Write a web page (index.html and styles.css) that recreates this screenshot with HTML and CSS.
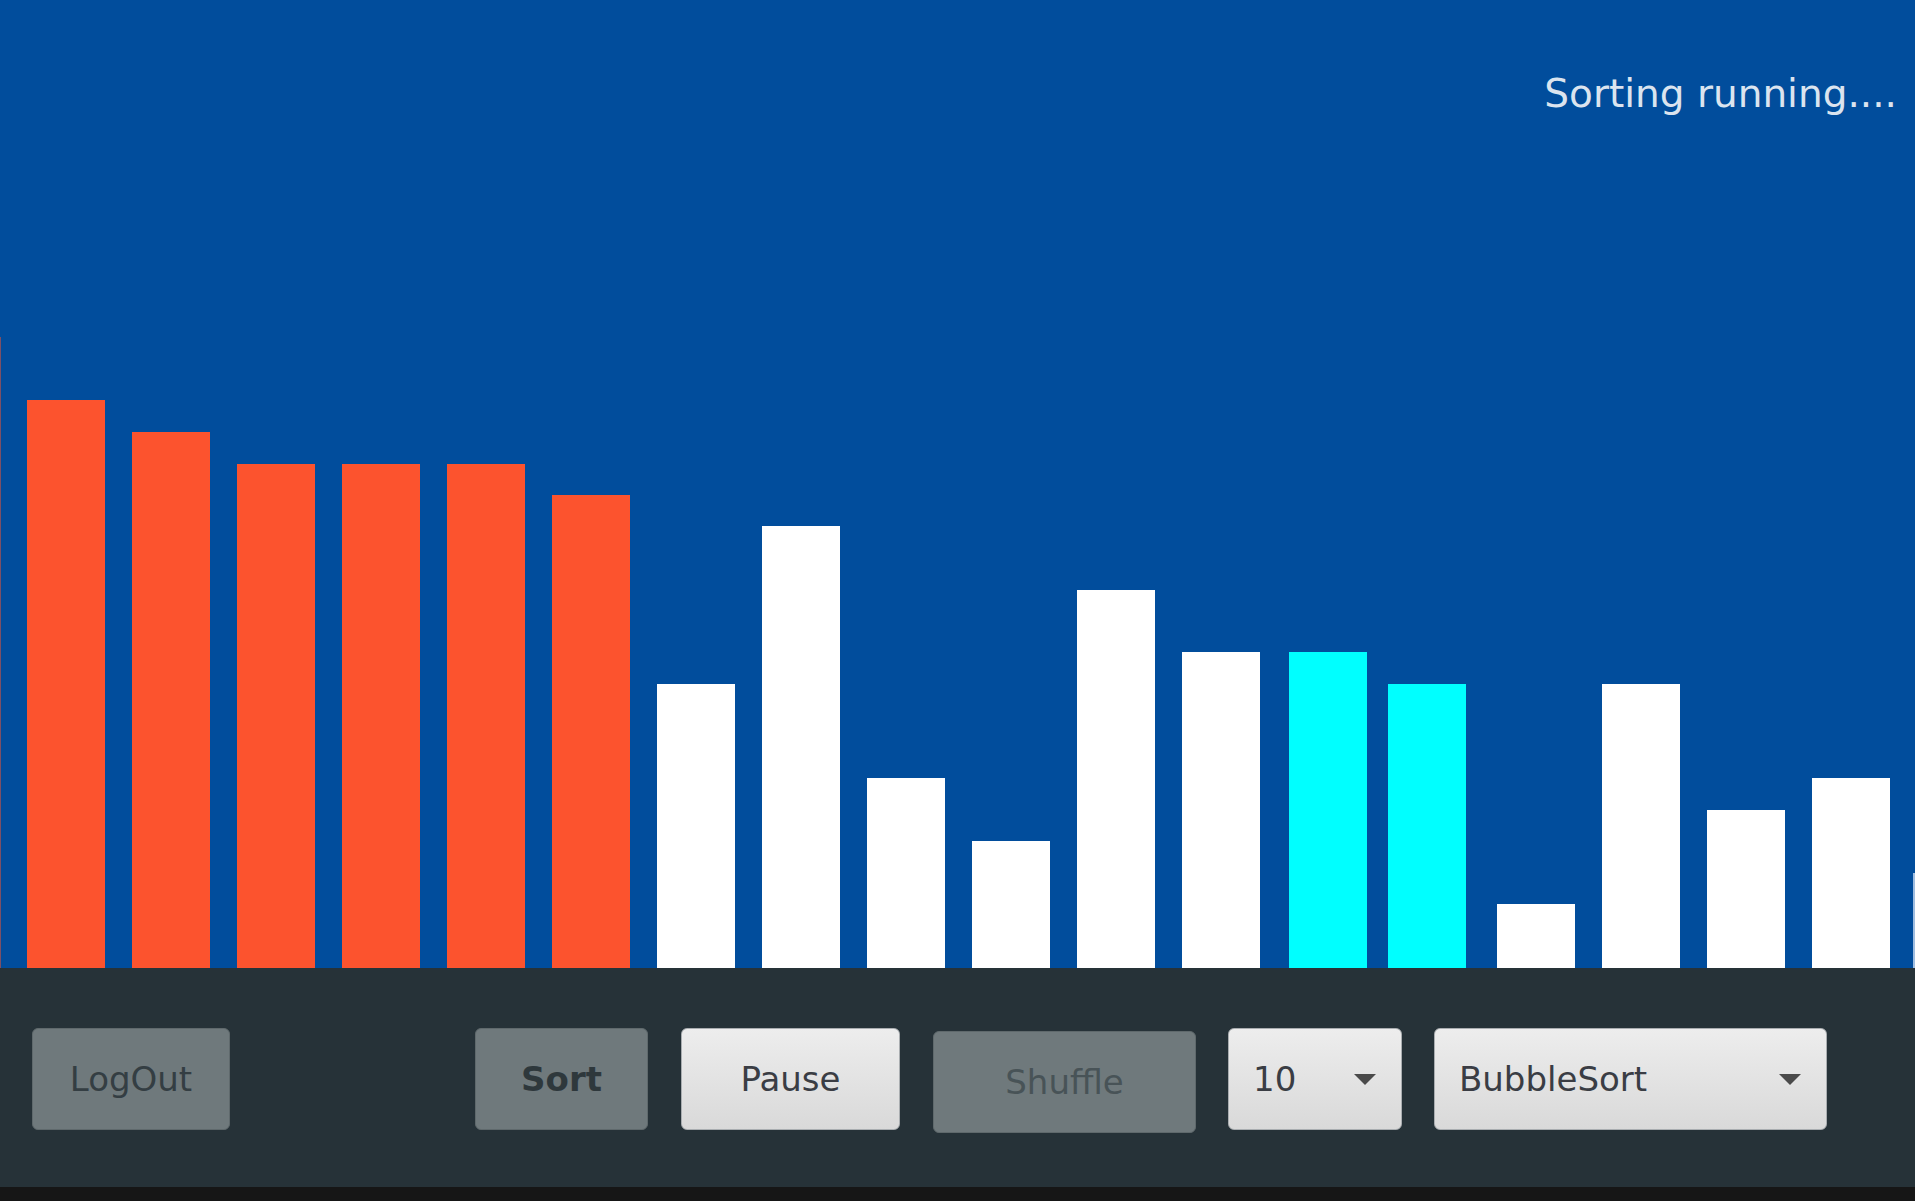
FILE: index.html
```html
<!DOCTYPE html>
<html>
<head>
<meta charset="utf-8">
<title>Sorting Visualizer</title>
<link rel="stylesheet" href="styles.css">
</head>
<body>
<div class="app">
  <main class="chart">
    <div class="status">Sorting running....</div>
    <div class="bars">
      <div class="edge edge-left" style="height:631px"></div>
      <div class="bar sorted" style="height:568px"></div>
      <div class="bar sorted" style="height:536px"></div>
      <div class="bar sorted" style="height:504px"></div>
      <div class="bar sorted" style="height:504px"></div>
      <div class="bar sorted" style="height:504px"></div>
      <div class="bar sorted" style="height:473px"></div>
      <div class="bar" style="height:284px"></div>
      <div class="bar" style="height:442px"></div>
      <div class="bar" style="height:190px"></div>
      <div class="bar" style="height:127px"></div>
      <div class="bar" style="height:378px"></div>
      <div class="bar" style="height:316px"></div>
      <div class="bar compare" style="height:316px;transform:translateX(2px)"></div>
      <div class="bar compare" style="height:284px;transform:translateX(-4px)"></div>
      <div class="bar" style="height:64px"></div>
      <div class="bar" style="height:284px"></div>
      <div class="bar" style="height:158px"></div>
      <div class="bar" style="height:190px"></div>
      <div class="edge edge-right" style="height:95px"></div>
    </div>
  </main>
  <footer class="controls">
    <button class="btn btn-grey btn-logout">LogOut</button>
    <div class="actions">
      <button class="btn btn-grey btn-sort">Sort</button>
      <button class="btn btn-light btn-pause">Pause</button>
      <button class="btn btn-grey btn-shuffle">Shuffle</button>
      <div class="combo combo-size"><span class="combo-value">10</span><span class="arrow"></span></div>
      <div class="combo combo-algo"><span class="combo-value">BubbleSort</span><span class="arrow"></span></div>
    </div>
  </footer>
  <div class="strip"></div>
</div>
</body>
</html>
```
FILE: styles.css
```css
* { box-sizing: border-box; }
html, body { margin: 0; padding: 0; }
body {
  width: 1915px;
  height: 1201px;
  overflow: hidden;
  background: #161616;
  font-family: "DejaVu Sans", "Liberation Sans", sans-serif;
}
.app { display: flex; flex-direction: column; height: 1201px; }

.chart {
  height: 968px;
  background: #014d9c;
  display: flex;
  flex-direction: column;
}
.status {
  align-self: flex-end;
  padding: 71px 18px 0 0;
  font-size: 39px;
  line-height: 45px;
  color: #dbe4ef;
}
.bars {
  flex: 1;
  display: flex;
  align-items: flex-end;
  gap: 27px;
  overflow: hidden;
}
.bar { width: 78px; flex: none; background: #ffffff; }
.bar.sorted { background: #fc532e; }
.bar.compare { background: #00ffff; }
.edge { flex: none; }
.edge-left { width: 1px; margin-right: -1px; background: #7d5065; }
.edge-right { width: 2px; margin-left: -4px; background: #9fbde0; }

.controls {
  height: 219px;
  background: #263238;
  display: flex;
  align-items: flex-start;
  padding: 60px 0 0 32px;
}
.actions {
  display: flex;
  align-items: flex-start;
  gap: 33px;
  margin-left: 245px;
}
.btn {
  height: 102px;
  border-radius: 6px;
  font-family: "DejaVu Sans", "Liberation Sans", sans-serif;
  font-size: 34px;
  padding: 0;
  display: flex;
  align-items: center;
  justify-content: center;
}
.btn-grey {
  background: #6f797c;
  border: 1px solid #5f696c;
  color: #343e43;
}
.btn-light, .combo {
  background: linear-gradient(#ededed, #d9d9d9);
  border: 1px solid #a9adb0;
  color: #3a3d44;
}
.btn-logout { width: 198px; }
.btn-sort { width: 173px; font-weight: bold; color: #2e383c; }
.btn-pause { width: 219px; }
.btn-shuffle { width: 263px; margin-top: 3px; color: #485357; }

.combo {
  height: 102px;
  border-radius: 6px;
  display: flex;
  align-items: center;
  justify-content: space-between;
  padding: 0 25px 0 24px;
  font-size: 34px;
}
.combo-size { width: 174px; margin-left: -1px; }
.combo-algo { width: 393px; margin-left: -1px; }
.arrow {
  width: 0;
  height: 0;
  border-left: 11px solid transparent;
  border-right: 11px solid transparent;
  border-top: 11px solid #4a4a4a;
}
.strip { height: 14px; background: #161616; }
```
